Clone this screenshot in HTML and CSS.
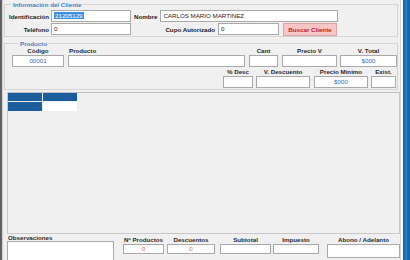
FILE: index.html
```html
<!DOCTYPE html>
<html lang="es">
<head>
<meta charset="utf-8">
<title>Venta</title>
<link rel="stylesheet" href="styles.css">
</head>
<body>
<div class="window">
  <div class="frame-left"></div>
  <main class="content">
    <fieldset class="group client">
      <legend>Información del Cliente</legend>
      <div class="row">
        <span class="lbl lbl-first">Identificación</span>
        <div class="inp w-id"><span class="sel">21205129</span></div>
        <span class="lbl lbl-nombre">Nombre</span>
        <div class="inp w-name">CARLOS MARIO MARTINEZ</div>
      </div>
      <div class="row">
        <span class="lbl lbl-first">Teléfono</span>
        <div class="inp w-id">0</div>
        <span class="lbl lbl-cupo">Cupo Autorizado</span>
        <div class="inp w-cupo">0</div>
        <button class="btn-buscar" type="button">Buscar Cliente</button>
      </div>
    </fieldset>

    <fieldset class="group product">
      <legend>Producto</legend>
      <div class="prow first">
        <div class="field w-cod"><span class="flbl">Código</span><div class="inp c blue">00001</div></div>
        <div class="field w-prod"><span class="flbl left">Producto</span><div class="inp"></div></div>
        <div class="field w-cant"><span class="flbl">Cant</span><div class="inp"></div></div>
        <div class="field w-pv"><span class="flbl">Precio V</span><div class="inp"></div></div>
        <div class="field w-vt"><span class="flbl">V. Total</span><div class="inp c blue">$000</div></div>
      </div>
      <div class="prow second">
        <div class="field w-desc"><span class="flbl">% Desc</span><div class="inp"></div></div>
        <div class="field w-vd"><span class="flbl">V. Descuento</span><div class="inp"></div></div>
        <div class="field w-pm"><span class="flbl">Precio Mínimo</span><div class="inp c blue">$000</div></div>
        <div class="field w-ex"><span class="flbl">Exist.</span><div class="inp"></div></div>
      </div>
    </fieldset>

    <section class="table-panel">
      <div class="grid">
        <div class="cell head"></div><div class="cell head"></div>
        <div class="cell head"></div><div class="cell white"></div>
      </div>
    </section>

    <footer class="bottom">
      <div class="obs">
        <span class="flbl left">Observaciones</span>
        <div class="inp area"></div>
      </div>
      <div class="totals">
        <div class="field w-np"><span class="flbl">Nº Productos</span><div class="inp small c orange">0</div></div>
        <div class="field w-ds"><span class="flbl">Descuentos</span><div class="inp small c orange">0</div></div>
        <div class="field w-st"><span class="flbl">Subtotal</span><div class="inp small"></div></div>
        <div class="field w-im"><span class="flbl">Impuesto</span><div class="inp small"></div></div>
        <div class="field w-ab"><span class="flbl">Abono / Adelanto</span><div class="inp tall"></div></div>
      </div>
    </footer>
  </main>
  <div class="frame-right"></div>
</div>
</body>
</html>
```
FILE: styles.css
```css
* { box-sizing: border-box; }
html, body { margin: 0; padding: 0; }
body {
  width: 410px;
  height: 260px;
  overflow: hidden;
  background: #f0f0f0;
  font-family: "Liberation Sans", Arial, sans-serif;
  font-size: 6.2px;
  color: #1a1a1a;
}
.window { display: flex; height: 260px; overflow: hidden; }
.frame-left {
  width: 4px;
  flex: none;
  background: linear-gradient(to right, #5a5a5a 0, #6a6a6a 2px, #bdbdbd 2px, #e6e6e6 3px, #f0f0f0 4px);
}
.frame-right {
  width: 10px;
  flex: none;
  background: linear-gradient(to right, #d8d8d8 0, #d8d8d8 1px, #f6f6f6 1px, #f6f6f6 3px, #1a64a8 3px, #1e6cb4 5px, #3a86c8 6px, #1e6cb4 7px, #1a62a6 10px);
}
.content { flex: 1; min-width: 0; display: flex; flex-direction: column; }
.content > * { flex: none; }

.group {
  margin: 0;
  border: 1px solid #d4d4d4;
  padding: 0;
  min-width: 0;
}
.group legend {
  color: #4a7cc0;
  font-weight: bold;
  font-size: 6.2px;
  padding: 0 1px;
  margin-left: 7px;
  line-height: 7px;
}
.client { margin: 1px 2px 0 0; padding: 2px 0 1px; }
.row { display: flex; align-items: center; height: 12px; }
.row + .row { margin-top: 1px; }
.lbl { font-weight: bold; white-space: nowrap; }
.lbl-first { width: 44px; text-align: right; margin-right: 2px; }
.lbl-nombre { margin: 0 3px 0 3px; }
.lbl-cupo { width: 84px; text-align: right; margin-right: 3px; }

.inp {
  background: #fff;
  border: 1px solid #a9a9a9;
  height: 12px;
  line-height: 10px;
  padding: 0 2px;
  font-size: 6.2px;
  white-space: nowrap;
  overflow: hidden;
  color: #222;
}
.w-id { width: 80px; }
.w-name { width: 178px; }
.w-cupo { width: 61px; }
.sel { background: #3b8ee0; color: #fff; padding: 0 1px; }
.btn-buscar {
  width: 54px;
  height: 13px;
  margin-left: 4px;
  padding: 0;
  background: #f6c6c6;
  border: 1px solid #dba4a4;
  color: #c41c1c;
  font: bold 6.2px "Liberation Sans", Arial, sans-serif;
}

.product { margin: 3px 2px 0 0; padding: 0 0 1px 7px; }
.prow { display: flex; }
.prow.second { justify-content: flex-end; margin-top: 1px; padding-right: 1px; }
.field { display: flex; flex-direction: column; flex: none; }
.flbl {
  font-weight: bold;
  text-align: center;
  height: 8px;
  line-height: 8px;
  white-space: nowrap;
  color: #2a2a2a;
}
.flbl.left { text-align: left; padding-left: 1px; }
.c { text-align: center; }
.blue { color: #2f6fc0; }
.orange { color: #e0704c; }
.w-cod { width: 52px; }
.w-prod { width: 177px; margin-left: 4px; }
.w-cant { width: 29px; margin-left: 4px; }
.w-pv { width: 55px; margin-left: 4px; }
.w-vt { width: 57px; margin-left: 3px; }
.w-desc { width: 30px; }
.w-vd { width: 54px; margin-left: 3px; }
.w-pm { width: 54px; margin-left: 4px; }
.w-ex { width: 25px; margin-left: 3px; }

.table-panel {
  margin: 2px 0 0 3px;
  height: 142px;
  border: 1px solid #c8c8c8;
  border-top-color: #bdbdbd;
  background: #f0f0f0;
}
.grid {
  display: grid;
  grid-template-columns: 34px 34px;
  grid-template-rows: 8px 9px;
  gap: 1px;
  width: 69px;
}
.cell.head { background: #1a5e9e; }
.cell.white { background: #fff; }

.bottom { display: flex; padding: 1px 0 0 3px; }
.obs { display: flex; flex-direction: column; }
.obs .flbl { height: 6px; line-height: 6px; }
.area { width: 107px; height: 25px; }
.totals { display: flex; padding-top: 1px; margin-left: 9px; }
.small { height: 10px; line-height: 8px; }
.tall { height: 14px; }
.w-np { width: 41px; }
.w-ds { width: 48px; margin-left: 3px; }
.w-st { width: 51px; margin-left: 5px; }
.w-im { width: 46px; margin-left: 2px; }
.w-ab { width: 73px; margin-left: 8px; }
```
